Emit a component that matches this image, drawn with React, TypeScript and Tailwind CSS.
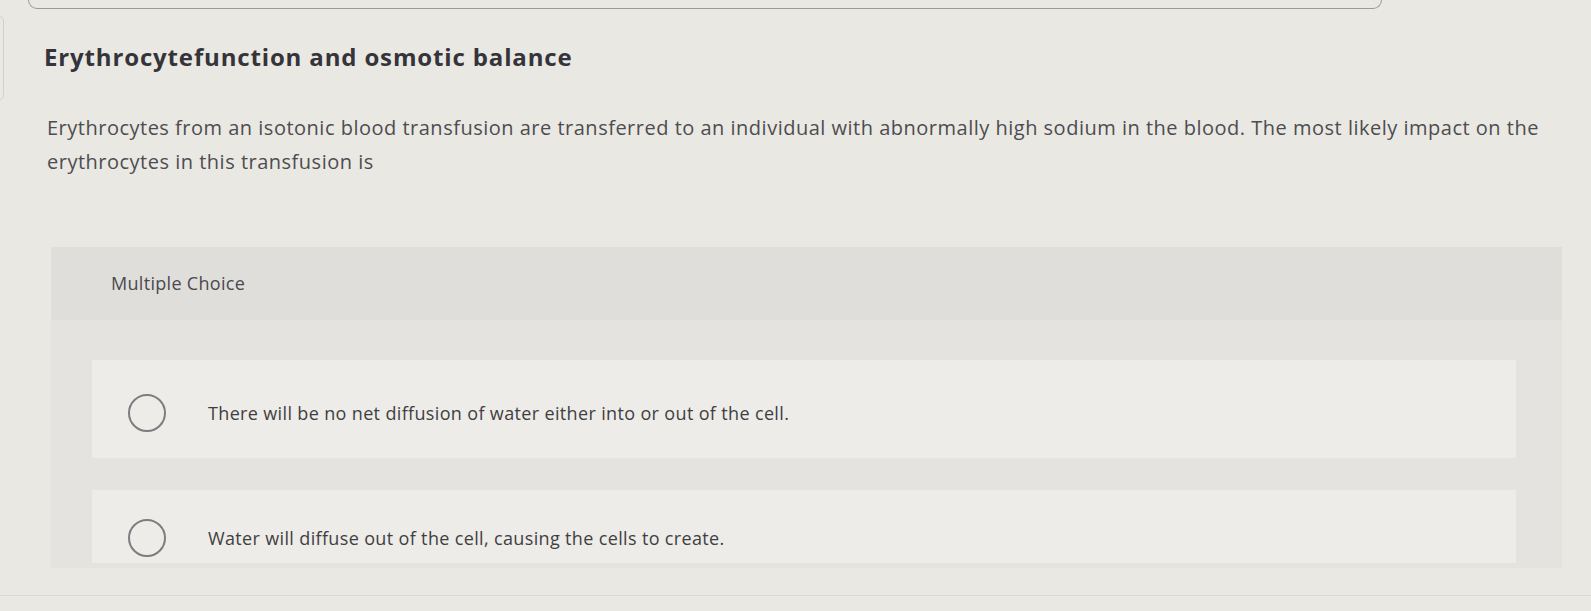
const options = [
  "There will be no net diffusion of water either into or out of the cell.",
  "Water will diffuse out of the cell, causing the cells to create.",
];

const Radio = () => (
  <span className="block h-[38px] w-[38px] shrink-0 rounded-full border-2 border-[#7d7d80]" />
);

export default function App() {
  return (
    <div
      className="relative min-h-[611px] w-full overflow-hidden bg-[#eae8e3]"
      style={{ fontFamily: "'Open Sans', Lato, sans-serif" }}
    >
      {/* edge of the previous card */}
      <div className="ml-[28px] h-[9px] w-[1354px] rounded-b-[10px] border-x border-b border-[#9a9a9e]" />

      {/* side tab, mostly off screen */}
      <div className="absolute left-[-20px] top-[15px] h-[86px] w-[24px] rounded-md border border-[#d3d1cc]" />

      <h1 className="ml-[44px] mt-[33px] text-[24px] font-bold leading-[30px] tracking-[0.85px] text-[#34343a]">
        Erythrocytefunction and osmotic balance
      </h1>

      <p className="ml-[47px] mt-[39px] w-[1512px] text-[20px] leading-[34px] tracking-[0.5px] text-[#4d4d50]">
        Erythrocytes from an isotonic blood transfusion are transferred to an individual with abnormally high sodium in the blood. The most likely impact on the erythrocytes in this transfusion is
      </p>

      <section className="ml-[51px] mt-[68px] w-[1511px] bg-[#e4e3df] pb-[5px]">
        <div className="flex h-[73px] items-center bg-[#dfdedb] pl-[60px]">
          <span className="text-[18px] tracking-[0.3px] text-[#4a4a4e]">Multiple Choice</span>
        </div>
        <div className="flex flex-col gap-[32px] pl-[41px] pr-[46px] pt-[40px]">
          {options.map((text, i) => (
            <div
              key={i}
              className={`flex items-start gap-[42px] bg-[#edece8] pl-[36px] ${i === 0 ? "h-[98px] pt-[34px]" : "h-[73px] pt-[29px]"}`}
            >
              <Radio />
              <span className="text-[18px] leading-[38px] tracking-[0.35px] text-[#3f3f42]">{text}</span>
            </div>
          ))}
        </div>
      </section>

      <div className="mt-[27px] border-t border-[#dcdad5]" />
    </div>
  );
}
